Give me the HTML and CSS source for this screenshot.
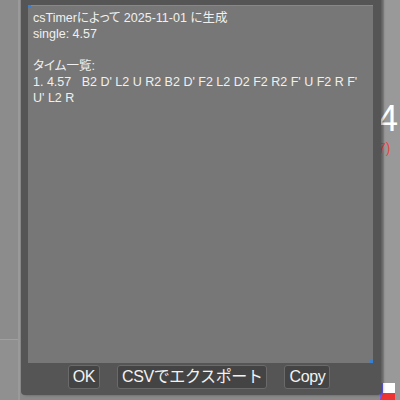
FILE: index.html
```html
<!DOCTYPE html>
<html lang="ja">
<head>
<meta charset="utf-8">
<link rel="stylesheet" href="styles.css">
</head>
<body>
<div class="page">
  <div class="left-band">
    <div class="spacer"></div>
    <div class="left-box"></div>
  </div>
  <div class="center"></div>
  <div class="right-band">
    <div class="big">4</div>
    <div class="red">7)</div>
    <div class="spacer"></div>
    <div class="white-box"></div>
  </div>
</div>
<div class="dialog">
  <div class="textarea">
    <div class="line">csTimerによって 2025-11-01 に生成</div>
    <div class="line">single: 4.57</div>
    <div class="line">&nbsp;</div>
    <div class="line">タイム一覧:</div>
    <div class="line">1. 4.57&nbsp;&nbsp;&nbsp;B2 D' L2 U R2 B2 D' F2 L2 D2 F2 R2 F' U F2 R F'</div>
    <div class="line">U' L2 R</div>
  </div>
  <div class="buttons">
    <button class="btn">OK</button>
    <button class="btn">CSVでエクスポート</button>
    <button class="btn">Copy</button>
  </div>
</div>
</body>
</html>
```
FILE: styles.css
```css
html, body {
  margin: 0;
  padding: 0;
  width: 400px;
  height: 400px;
  overflow: hidden;
  background: #8a8a8a;
  font-family: "Liberation Sans", "Noto Sans CJK JP", sans-serif;
}
.page {
  display: flex;
  height: 400px;
}
.left-band {
  width: 18px;
  background: #8c8c8c;
  border-right: 2px solid #9a9a9a;
  display: flex;
  flex-direction: column;
}
.left-box {
  height: 60px;
  border-top: 1px solid #a0a0a0;
  background: #909090;
}
.center {
  flex: 1;
}
.right-band {
  width: 16px;
  background: #999;
  display: flex;
  flex-direction: column;
  align-items: flex-start;
  padding-top: 104px;
}
.big {
  color: #fff;
  font-size: 36px;
  line-height: 30px;
  margin-left: -6px;
}
.red {
  color: #e44;
  font-size: 14px;
  margin-left: -6px;
  margin-top: 6px;
}
.spacer { flex: 1; }
.white-box {
  width: 12px;
  height: 10px;
  background: #fff;
  border-bottom: 7px solid #e33;
  border-left: 3px solid #66f;
  margin-left: -4px;
}
.dialog {
  position: absolute;
  left: 21px;
  top: -4px;
  width: 360px;
  height: 399px;
  background: #555;
  box-shadow: 2px 0 3px rgba(0,0,0,0.35);
  border-radius: 0 0 4px 4px;
  display: flex;
  flex-direction: column;
  box-sizing: border-box;
  padding: 9px 8px 6px 7px;
}
.textarea {
  position: relative;
  flex: 1;
  background: #777;
  border-top: 1px solid #888;
  color: #f0f0f0;
  font-size: 12.5px;
  line-height: 16px;
  padding: 4px 5px;
  font-feature-settings: "palt";
}
.textarea::before,
.textarea::after {
  content: "";
  position: absolute;
  width: 3px;
  height: 3px;
  background: #3a7fd0;
}
.textarea::before { left: 0; top: -1px; }
.textarea::after { right: 0; bottom: 0; }
.line {
  white-space: nowrap;
}
.buttons {
  display: flex;
  justify-content: center;
  gap: 17px;
  padding-top: 2px;
  height: 24px;
  margin-left: -3px;
}
.btn {
  background: #444;
  color: #f2f2f2;
  border: 1px solid #6a6a6a;
  border-radius: 3px;
  font-family: "Liberation Sans", "Noto Sans CJK JP", sans-serif;
  font-size: 16px;
  letter-spacing: -0.4px;
  padding: 0 4px;
  height: 24px;
  line-height: 22px;
}
```
